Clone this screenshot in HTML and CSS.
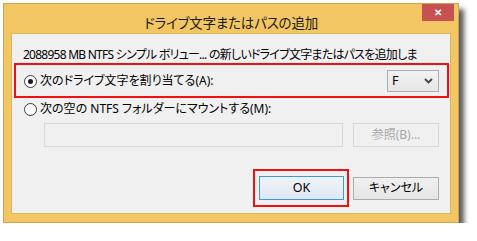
FILE: index.html
```html
<!DOCTYPE html>
<html lang="ja">
<head>
<meta charset="utf-8">
<title>ドライブ文字またはパスの追加</title>
<link rel="stylesheet" href="styles.css">
</head>
<body>
<div class="window">
  <div class="titlebar">
    <span></span>
    <span class="title">ドライブ文字またはパスの追加</span>
    <span class="close">✕</span>
  </div>
  <div class="client">
    <div class="desc">2088958 MB NTFS シンプル ボリュー... の新しいドライブ文字またはパスを追加しま</div>
    <div class="opt1">
      <span class="radio checked"></span>
      <span class="label">次のドライブ文字を割り当てる(A):</span>
      <span class="combo"><span>F</span>
        <svg width="9" height="6" viewBox="0 0 9 6"><path d="M1 1 L4.5 4.5 L8 1" fill="none" stroke="#444" stroke-width="1.8"/></svg>
      </span>
    </div>
    <div class="opt2">
      <span class="radio"></span>
      <span class="label">次の空の NTFS フォルダーにマウントする(M):</span>
    </div>
    <div class="pathrow">
      <span class="textbox"></span>
      <span class="btn disabled">参照(B)...</span>
    </div>
    <div class="btnrow">
      <span class="mark"><span class="btn default">OK</span></span>
      <span class="btn">キャンセル</span>
    </div>
  </div>
</div>
</body>
</html>
```
FILE: styles.css
```css
html, body {
  margin: 0;
  padding: 0;
  background: #ffffff;
}
body {
  font-family: "Noto Sans", "Noto Sans CJK JP", sans-serif;
  font-size: 12px;
  color: #000;
  font-feature-settings: "palt";
}
.window {
  margin: 3px 0 0 3px;
  width: 454px;
  height: 218px;
  background: #f2c662;
  border: 1px solid #cfa650;
  box-shadow: 5px 6px 5px rgba(0, 0, 0, 0.65);
  display: flex;
  flex-direction: column;
}
.titlebar {
  height: 29px;
  display: grid;
  grid-template-columns: 1fr auto 1fr;
  align-items: start;
}
.title {
  font-family: "Noto Sans CJK JP", sans-serif;
  font-size: 13.5px;
  line-height: 16px;
  margin-top: 10px;
  color: #1a1a1a;
  letter-spacing: -0.2px;
}
.close {
  justify-self: end;
  margin-right: 4px;
  width: 32px;
  height: 17px;
  background: #c75050;
  color: #fff;
  font-size: 10px;
  font-weight: bold;
  line-height: 17px;
  text-align: center;
}
.client {
  margin: 0 7px 8px 7px;
  flex: 1;
  background: #f0f0f0;
  border: 1px solid #d8b465;
  padding: 12px 1px 0 2px;
  display: flex;
  flex-direction: column;
}
.desc {
  padding-left: 9px;
  height: 17px;
  line-height: 17px;
  white-space: nowrap;
  letter-spacing: -0.75px;
}
.opt1 {
  height: 31px;
  border: 2px solid #f01010;
  display: flex;
  align-items: center;
  padding: 0 8px 0 8px;
}
.opt1 .combo {
  margin-left: auto;
}
.radio {
  width: 11px;
  height: 11px;
  border: 1px solid #3c3c3c;
  border-radius: 50%;
  background: #fff;
  display: inline-flex;
  align-items: center;
  justify-content: center;
  flex: none;
  margin-top: 1px;
}
.radio.checked::after {
  content: "";
  width: 5px;
  height: 5px;
  border-radius: 50%;
  background: #1a1a1a;
}
.label {
  margin-left: 3px;
  line-height: 16px;
}
.combo {
  border: 1px solid #acacac;
  background: linear-gradient(#f2f2f2, #e6e6e6);
  display: flex;
  align-items: center;
  justify-content: space-between;
  padding: 0 5px 0 4px;
  box-sizing: border-box;
  width: 52px;
  height: 22px;
}
.combo span {
  font-size: 12.5px;
}
.opt2 {
  height: 22px;
  display: flex;
  align-items: center;
  padding-left: 10px;
}
.pathrow {
  margin-top: 3px;
  display: flex;
  padding-left: 30px;
  gap: 10px;
}
.textbox {
  width: 299px;
  height: 24px;
  box-sizing: border-box;
  border: 1px solid #d9d9d9;
  background: #f0f0f0;
}
.btn {
  width: 86px;
  height: 23px;
  box-sizing: border-box;
  border: 1px solid #acacac;
  background: linear-gradient(#f0f0f0, #e5e5e5);
  display: inline-flex;
  align-items: center;
  justify-content: center;
  line-height: 16px;
}
.btn.disabled {
  height: 24px;
  color: #a8a8a8;
  border-color: #d9d9d9;
  background: #f0f0f0;
}
.btnrow {
  margin-top: 22px;
  display: flex;
  justify-content: flex-end;
  align-items: center;
  gap: 4px;
  padding-right: 10px;
}
.mark {
  border: 2px solid #f01010;
  padding: 5px 3px 5px 4px;
  display: flex;
}
.btn.default {
  width: 85px;
  height: 24px;
  border-color: #3c9be0;
  background: linear-gradient(#eef3f8, #e0e8f0);
  font-size: 12.5px;
}
```
